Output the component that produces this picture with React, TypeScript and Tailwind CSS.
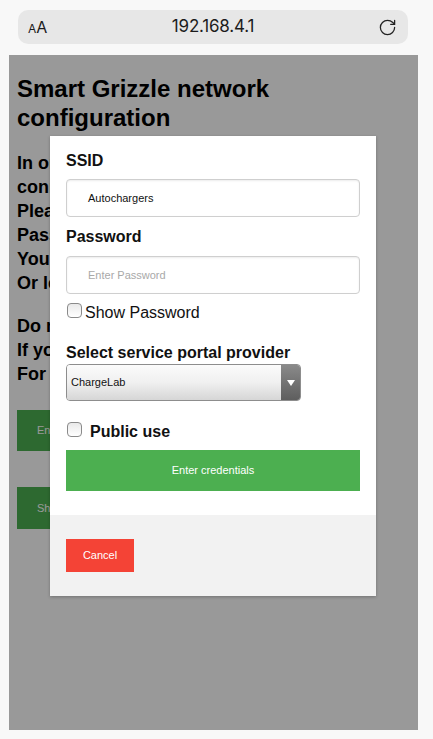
import { RotateCw } from "lucide-react";

function FakeCheckbox() {
  return (
    <span className="inline-block w-[15px] h-[15px] rounded-[4px] border border-[#8a8a8a] bg-gradient-to-b from-[#e9e9e9] to-white shrink-0"></span>
  );
}

export default function App() {
  const bodyLines = [
    "In order to set up your charger network",
    "connection, select the WiFi network.",
    "Please enter the SSID and",
    "Password of your network.",
    "You can also scan for networks",
    "Or leave it as it is.",
  ];
  const moreLines = [
    "Do not close this page while saving.",
    "If you need help contact support.",
    "For more information visit us.",
  ];

  return (
    <div
      className="w-[433px] h-[739px] bg-[#f8f8f8] overflow-hidden"
      style={{ fontFamily: '"Liberation Sans", Arial, sans-serif' }}
    >
      {/* browser bar */}
      <div className="h-[55px] pt-[10px] px-[18px] pr-[25px]">
        <div
          className="h-[34px] rounded-[10px] bg-[#e7e7e7] flex items-center px-[10px] text-[#1c1c1c]"
          style={{ fontFamily: "Inter, Roboto, sans-serif" }}
        >
          <span className="w-[40px] flex items-baseline">
            <span className="text-[12px]">A</span>
            <span className="text-[16px]">A</span>
          </span>
          <span className="flex-1 text-center text-[17px] tracking-[-0.2px]">192.168.4.1</span>
          <span className="w-[40px] flex justify-end pr-[1px]">
            <RotateCw size={19} strokeWidth={1.6} className="text-[#222]" />
          </span>
        </div>
      </div>

      {/* page viewport */}
      <div className="ml-[9px] w-[409px] h-[675px] relative overflow-hidden bg-white">
        <div className="pl-[8px] pt-[19px]">
          <h2 className="text-[24px] leading-[29px] font-bold text-black">
            Smart Grizzle network
            <br />
            configuration
          </h2>
          <div className="mt-[19px] text-[18px] leading-[24px] font-bold text-black whitespace-nowrap">
            {bodyLines.map((l) => (
              <div key={l}>{l}</div>
            ))}
          </div>
          <div className="mt-[19px] text-[18px] leading-[24px] font-bold text-black whitespace-nowrap">
            {moreLines.map((l) => (
              <div key={l}>{l}</div>
            ))}
          </div>
          <div className="mt-[24px] w-[300px] h-[41px] bg-[#4caf50] text-white text-[11px] flex items-center pl-[20px]">
            Enter credentials
          </div>
          <div className="mt-[36px] w-[300px] h-[42px] bg-[#4caf50] text-white text-[11px] flex items-center pl-[20px]">
            Show networks
          </div>
        </div>

        {/* overlay */}
        <div className="absolute inset-0 bg-[#000]/40"></div>

        {/* modal */}
        <div className="absolute left-[41px] top-[81px] w-[326px] bg-white shadow-[0_1px_3px_rgba(0,0,0,0.25)]">
          <div className="px-[16px] pt-[15px] pb-[24px]">
            <div className="text-[16px] leading-[20px] font-bold text-[#111]">SSID</div>
            <div className="mt-[8px] h-[38px] rounded-[4px] border border-[#cfcfcf] shadow-[inset_0_1px_2px_rgba(0,0,0,0.08)] flex items-center pl-[21px] text-[11px] text-[#111]">
              Autochargers
            </div>
            <div className="mt-[10px] text-[16px] leading-[20px] font-bold text-[#111]">Password</div>
            <div className="mt-[9px] h-[38px] rounded-[4px] border border-[#cfcfcf] shadow-[inset_0_1px_2px_rgba(0,0,0,0.08)] flex items-center pl-[21px] text-[11px] text-[#a9a9a9]">
              Enter Password
            </div>
            <div className="mt-[10px] h-[18px] flex items-center">
              <span className="ml-[1px]">
                <FakeCheckbox />
              </span>
              <span className="ml-[3px] text-[16px] text-[#111]">Show Password</span>
            </div>
            <div className="mt-[21px] text-[16px] leading-[20px] font-bold text-[#111]">
              Select service portal provider
            </div>
            <div className="mt-[1px] w-[235px] h-[37px] rounded-[4px] border border-[#8d8d8d] flex overflow-hidden">
              <div className="flex-1 bg-gradient-to-b from-[#fbfbfb] via-[#f0f0f0] to-[#d6d6d6] flex items-center pl-[4px] text-[11px] text-[#111]">
                ChargeLab
              </div>
              <div className="w-[19px] bg-gradient-to-b from-[#8a8a8a] to-[#5e5e5e] flex items-center justify-center">
                <svg width="8" height="6" viewBox="0 0 8 6">
                  <path d="M0 0 L8 0 L4 6 Z" fill="#ffffff" />
                </svg>
              </div>
            </div>
            <div className="mt-[22px] h-[18px] flex items-center">
              <span className="ml-[1px]">
                <FakeCheckbox />
              </span>
              <span className="ml-[8px] text-[16px] font-bold text-[#111]">Public use</span>
            </div>
            <div className="mt-[9px] h-[41px] bg-[#4caf50] text-white text-[11px] flex items-center justify-center">
              Enter credentials
            </div>
          </div>
          <div className="bg-[#f2f2f2] px-[16px] pt-[24px] pb-[24px]">
            <div className="w-[68px] h-[33px] bg-[#f44336] text-white text-[11px] flex items-center justify-center">
              Cancel
            </div>
          </div>
        </div>
      </div>
    </div>
  );
}
